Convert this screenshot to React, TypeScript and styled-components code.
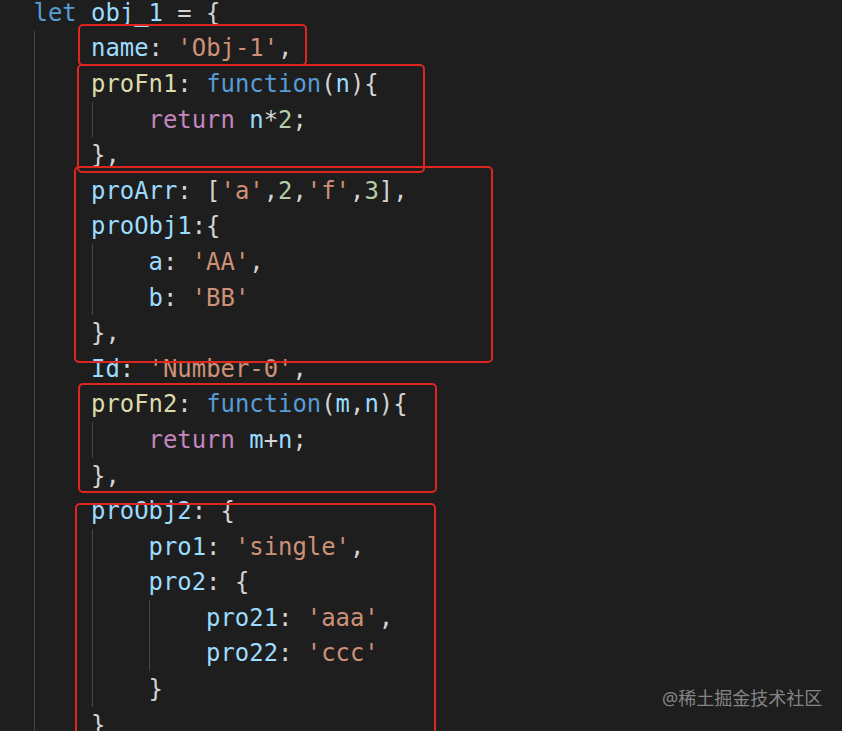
import React from "react";
import styled, { createGlobalStyle } from "styled-components";

const Global = createGlobalStyle`
  html, body {
    margin: 0;
    padding: 0;
    background: #1e1e1e;
    overflow: hidden;
  }
`;

const Page = styled.div`
  position: relative;
  width: 842px;
  height: 731px;
  overflow: hidden;
  background: #1e1e1e;
`;

const Code = styled.div`
  margin-top: -5px;
  font-family: "DejaVu Sans Mono", "Liberation Mono", monospace;
  font-size: 23.9px;
  color: #d4d4d4;
`;

const Line = styled.div`
  display: flex;
  align-items: center;
  height: 35.6px;
  padding-left: 33.5px;
  white-space: pre;
`;

const Indent = styled.span`
  position: relative;
  align-self: stretch;
  width: 4ch;
  flex: none;
  &::before {
    content: "";
    position: absolute;
    left: 0.5px;
    top: 0;
    bottom: 0;
    width: 1px;
    background: #464646;
  }
`;

type Kind = "kw" | "var" | "prop" | "fn" | "str" | "num" | "ctl" | "p";

const colors: Record<Kind, string> = {
  kw: "#569cd6",
  var: "#9cdcfe",
  prop: "#9cdcfe",
  fn: "#dcdcaa",
  str: "#ce9178",
  num: "#b5cea8",
  ctl: "#c586c0",
  p: "#d4d4d4",
};

const Tok = styled.span<{ $k: Kind }>`
  color: ${(p) => colors[p.$k]};
`;

const Box = styled.div<{ $x: number; $y: number; $w: number; $h: number }>`
  position: absolute;
  left: ${(p) => p.$x}px;
  top: ${(p) => p.$y}px;
  width: ${(p) => p.$w}px;
  height: ${(p) => p.$h}px;
  border: 2px solid #dd2620;
  border-radius: 5px;
  box-sizing: border-box;
  pointer-events: none;
`;

const Watermark = styled.div`
  position: absolute;
  left: 662px;
  top: 686px;
  font-family: "Noto Sans", "Noto Sans CJK SC", sans-serif;
  font-size: 18px;
  line-height: 24px;
  color: #858585;
`;

type T = [Kind, string];

const lines: { d: number; t: T[] }[] = [
  { d: 0, t: [["kw", "let"], ["p", " "], ["var", "obj_1"], ["p", " = {"]] },
  { d: 1, t: [["prop", "name"], ["p", ": "], ["str", "'Obj-1'"], ["p", ","]] },
  { d: 1, t: [["fn", "proFn1"], ["p", ": "], ["kw", "function"], ["p", "("], ["var", "n"], ["p", "){"]] },
  { d: 2, t: [["ctl", "return"], ["p", " "], ["var", "n"], ["p", "*"], ["num", "2"], ["p", ";"]] },
  { d: 1, t: [["p", "},"]] },
  { d: 1, t: [["prop", "proArr"], ["p", ": ["], ["str", "'a'"], ["p", ","], ["num", "2"], ["p", ","], ["str", "'f'"], ["p", ","], ["num", "3"], ["p", "],"]] },
  { d: 1, t: [["prop", "proObj1"], ["p", ":{"]] },
  { d: 2, t: [["prop", "a"], ["p", ": "], ["str", "'AA'"], ["p", ","]] },
  { d: 2, t: [["prop", "b"], ["p", ": "], ["str", "'BB'"]] },
  { d: 1, t: [["p", "},"]] },
  { d: 1, t: [["prop", "Id"], ["p", ": "], ["str", "'Number-0'"], ["p", ","]] },
  { d: 1, t: [["fn", "proFn2"], ["p", ": "], ["kw", "function"], ["p", "("], ["var", "m"], ["p", ","], ["var", "n"], ["p", "){"]] },
  { d: 2, t: [["ctl", "return"], ["p", " "], ["var", "m"], ["p", "+"], ["var", "n"], ["p", ";"]] },
  { d: 1, t: [["p", "},"]] },
  { d: 1, t: [["prop", "proObj2"], ["p", ": {"]] },
  { d: 2, t: [["prop", "pro1"], ["p", ": "], ["str", "'single'"], ["p", ","]] },
  { d: 2, t: [["prop", "pro2"], ["p", ": {"]] },
  { d: 3, t: [["prop", "pro21"], ["p", ": "], ["str", "'aaa'"], ["p", ","]] },
  { d: 3, t: [["prop", "pro22"], ["p", ": "], ["str", "'ccc'"]] },
  { d: 2, t: [["p", "}"]] },
  { d: 1, t: [["p", "}"]] },
];

const boxes = [
  { x: 78, y: 24, w: 229, h: 42 },
  { x: 77, y: 64, w: 348, h: 109 },
  { x: 74, y: 166, w: 419, h: 197 },
  { x: 78, y: 383, w: 359, h: 110 },
  { x: 75, y: 503, w: 361, h: 240 },
];

export default function App() {
  return (
    <Page>
      <Global />
      <Code>
        {lines.map((ln, i) => (
          <Line key={i}>
            {Array.from({ length: ln.d }).map((_, j) => (
              <Indent key={j} />
            ))}
            {ln.t.map(([k, s], j) => (
              <Tok key={j} $k={k}>
                {s}
              </Tok>
            ))}
          </Line>
        ))}
      </Code>
      {boxes.map((b, i) => (
        <Box key={i} $x={b.x} $y={b.y} $w={b.w} $h={b.h} />
      ))}
      <Watermark>@稀土掘金技术社区</Watermark>
    </Page>
  );
}
